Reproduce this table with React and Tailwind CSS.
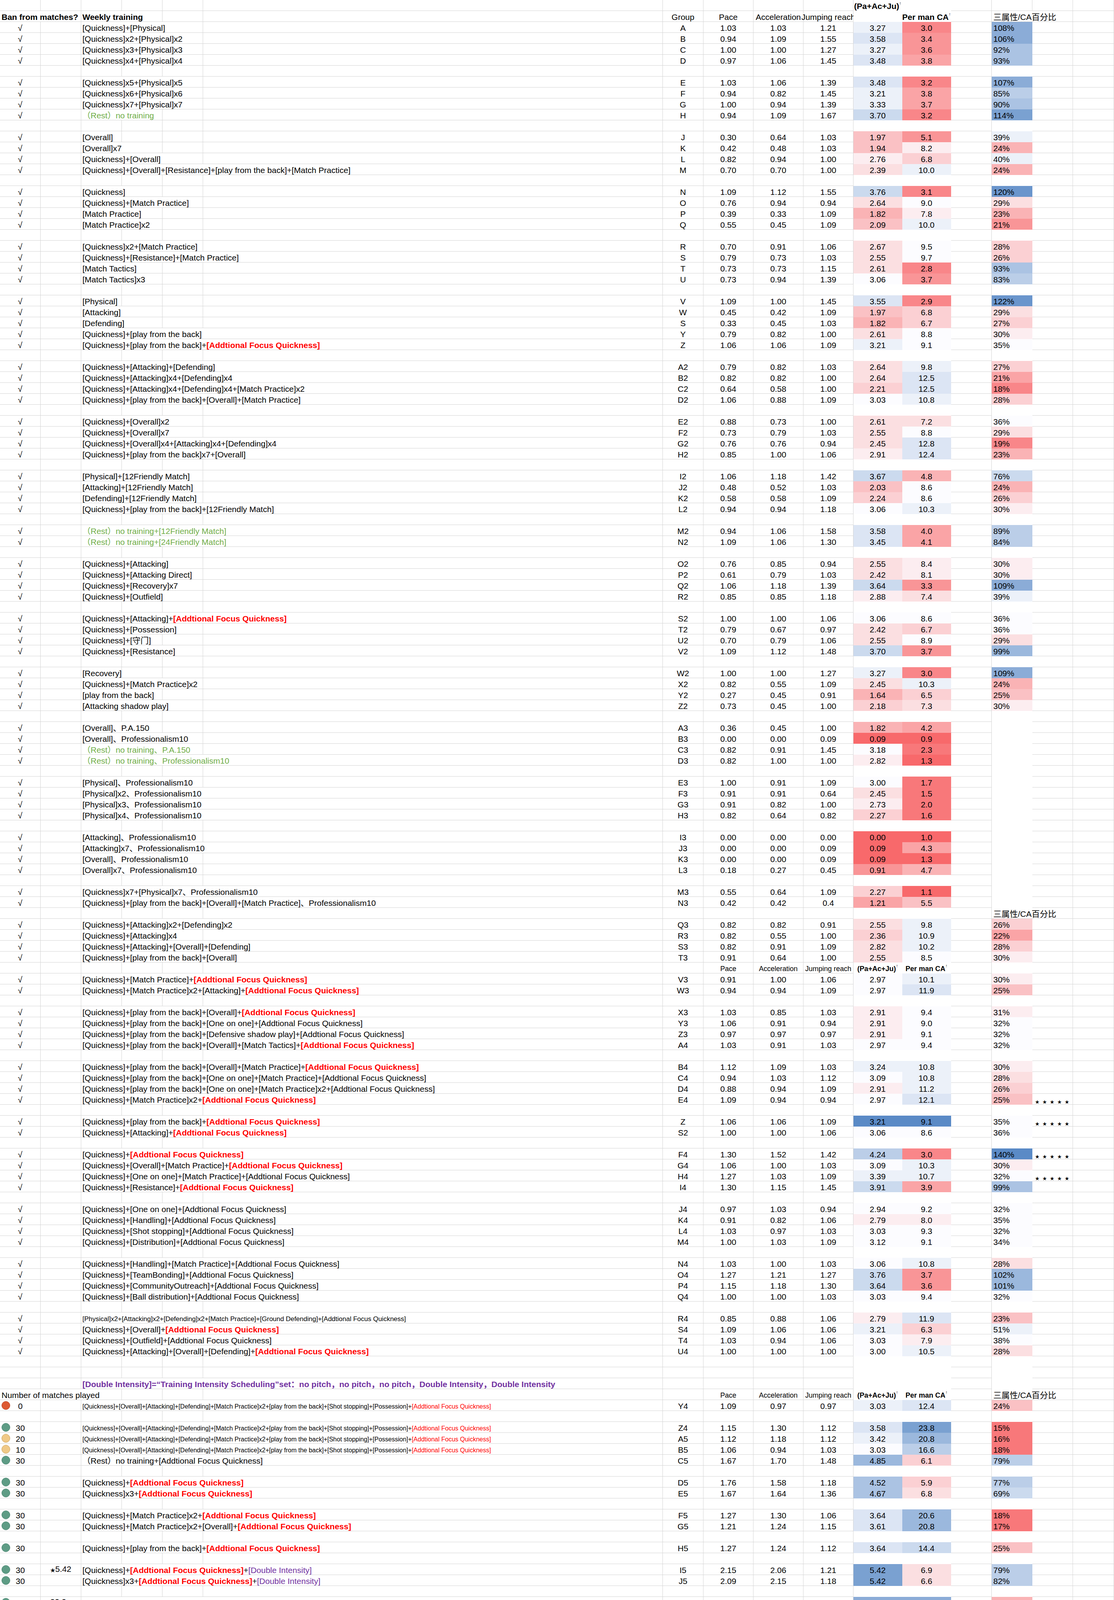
import React from "react";

const FONT = "font-['Liberation_Sans','Noto_Sans_CJK_SC',sans-serif]";
const COLS =
  "grid grid-cols-[104px_104px_104px_104px_104px_1177px_104px_128px_128px_128px_125px_125px_104px_104px_104px_105px]";
const LINE = "border-r border-b border-[#d4d4d4]";
const BASE = "h-7 min-w-0 flex items-end whitespace-nowrap leading-[22px]";
const SPAN = { 1: "", 2: "col-span-2", 3: "col-span-3", 4: "col-span-4" };

// red - white - blue scale, level -10 .. 10
const LV = [
  "bg-[#f8696b]", "bg-[#f8787a]", "bg-[#f98689]", "bg-[#f99597]", "bg-[#faa4a6]",
  "bg-[#fab3b5]", "bg-[#fac1c4]", "bg-[#fbd0d3]", "bg-[#fbdfe1]", "bg-[#fcedf0]",
  "bg-[#fcfcff]",
  "bg-[#ecf1f9]", "bg-[#dce5f4]", "bg-[#cbdaee]", "bg-[#bbcee8]", "bg-[#abc3e3]",
  "bg-[#9bb8dd]", "bg-[#8bacd7]", "bg-[#7aa1d1]", "bg-[#6a95cc]", "bg-[#5a8ac6]",
];

const TONE = {
  K: "",
  R: "text-[#ff0000] font-bold",
  r: "text-[#ff0000]",
  P: "text-[#7030a0] font-bold",
  p: "text-[#7030a0]",
  G: "text-[#70ad47]",
};

const DOT = {
  g: "bg-[#5e9c85] border-[#4b8570]",
  t: "bg-[#f0c987] border-[#c9a35e]",
  r: "bg-[#dd5a33] border-[#b8472a]",
};

const SIZE = {
  21: "text-[21px] leading-[22px]",
  17: "text-[17px] leading-[20px]",
  16: "text-[16px] leading-[20px]",
};

const Q = "[Quickness]";
const AF = "~R[Addtional Focus Quickness]";
const AFr = "~r[Addtional Focus Quickness]";
const DI = "~K+~p[Double Intensity]";
const PD = "+[Addtional Focus Quickness]+[Double Intensity]";
const LONG =
  Q + "+[Overall]+[Attacking]+[Defending]+[Match Practice]x2+[play from the back]+[Shot stopping]+[Possession]+" + AFr;
const PRO = "、Professionalism10";

const _ = { t: "b" };
const d = (a, b, text, g, h = "", i = "", j = "", k = "", kl = 0, l = "", ll = 0, n = "", nl = 0, o = {}) => ({
  t: "d", a, b, text, g, h, i, j, k, kl, l, ll, n, nl, ...o,
});
const v = (text, g, h, i, j, k, kl, l, ll, n = "", nl = 0, o = {}) => d("v", "", text, g, h, i, j, k, kl, l, ll, n, nl, o);

const ROWS = [
  { t: "h0" },
  { t: "h1" },
  v(Q + "+[Physical]", "A", "1.03", "1.03", "1.21", "3.27", 1, "3.0", -8, "108%", 7),
  v(Q + "x2+[Physical]x2", "B", "0.94", "1.09", "1.55", "3.58", 2, "3.4", -7, "106%", 7),
  v(Q + "x3+[Physical]x3", "C", "1.00", "1.00", "1.27", "3.27", 1, "3.6", -7, "92%", 5),
  v(Q + "x4+[Physical]x4", "D", "0.97", "1.06", "1.45", "3.48", 2, "3.8", -6, "93%", 5),
  _,
  v(Q + "x5+[Physical]x5", "E", "1.03", "1.06", "1.39", "3.48", 2, "3.2", -8, "107%", 7),
  v(Q + "x6+[Physical]x6", "F", "0.94", "0.82", "1.45", "3.21", 1, "3.8", -6, "85%", 4),
  v(Q + "x7+[Physical]x7", "G", "1.00", "0.94", "1.39", "3.33", 1, "3.7", -6, "90%", 5),
  v("~G（Rest）no training", "H", "0.94", "1.09", "1.67", "3.70", 3, "3.2", -8, "114%", 8),
  _,
  v("[Overall]", "J", "0.30", "0.64", "1.03", "1.97", -4, "5.1", -7, "39%", 1),
  v("[Overall]x7", "K", "0.42", "0.48", "1.03", "1.94", -4, "8.2", -1, "24%", -5),
  v(Q + "+[Overall]", "L", "0.82", "0.94", "1.00", "2.76", -1, "6.8", -3, "40%", 1),
  v(Q + "+[Overall]+[Resistance]+[play from the back]+[Match Practice]", "M", "0.70", "0.70", "1.00", "2.39", -2, "10.0", 1, "24%", -5),
  _,
  v(Q, "N", "1.09", "1.12", "1.55", "3.76", 3, "3.1", -8, "120%", 9),
  v(Q + "+[Match Practice]", "O", "0.76", "0.94", "0.94", "2.64", -2, "9.0", 0, "29%", -2),
  v("[Match Practice]", "P", "0.39", "0.33", "1.09", "1.82", -5, "7.8", -1, "23%", -5),
  v("[Match Practice]x2", "Q", "0.55", "0.45", "1.09", "2.09", -4, "10.0", 1, "21%", -7),
  _,
  v(Q + "x2+[Match Practice]", "R", "0.70", "0.91", "1.06", "2.67", -2, "9.5", 0, "28%", -3),
  v(Q + "+[Resistance]+[Match Practice]", "S", "0.79", "0.73", "1.03", "2.55", -2, "9.7", 0, "26%", -3),
  v("[Match Tactics]", "T", "0.73", "0.73", "1.15", "2.61", -2, "2.8", -8, "93%", 5),
  v("[Match Tactics]x3", "U", "0.73", "0.94", "1.39", "3.06", 0, "3.7", -7, "83%", 4),
  _,
  v("[Physical]", "V", "1.09", "1.00", "1.45", "3.55", 2, "2.9", -8, "122%", 9),
  v("[Attacking]", "W", "0.45", "0.42", "1.09", "1.97", -4, "6.8", -3, "29%", -2),
  v("[Defending]", "S", "0.33", "0.45", "1.03", "1.82", -5, "6.7", -3, "27%", -3),
  v(Q + "+[play from the back]", "Y", "0.79", "0.82", "1.00", "2.61", -2, "8.8", 0, "30%", -1),
  v(Q + "+[play from the back]+" + AF, "Z", "1.06", "1.06", "1.09", "3.21", 1, "9.1", 0, "35%", 0),
  _,
  v(Q + "+[Attacking]+[Defending]", "A2", "0.79", "0.82", "1.03", "2.64", -2, "9.8", 1, "27%", -3),
  v(Q + "+[Attacking]x4+[Defending]x4", "B2", "0.82", "0.82", "1.00", "2.64", -2, "12.5", 2, "21%", -6),
  v(Q + "+[Attacking]x4+[Defending]x4+[Match Practice]x2", "C2", "0.64", "0.58", "1.00", "2.21", -3, "12.5", 2, "18%", -8),
  v(Q + "+[play from the back]+[Overall]+[Match Practice]", "D2", "1.06", "0.88", "1.09", "3.03", 0, "10.8", 1, "28%", -3),
  _,
  v(Q + "+[Overall]x2", "E2", "0.88", "0.73", "1.00", "2.61", -2, "7.2", -2, "36%", 0),
  v(Q + "+[Overall]x7", "F2", "0.73", "0.79", "1.03", "2.55", -2, "8.8", 0, "29%", -2),
  v(Q + "+[Overall]x4+[Attacking]x4+[Defending]x4", "G2", "0.76", "0.76", "0.94", "2.45", -2, "12.8", 2, "19%", -8),
  v(Q + "+[play from the back]x7+[Overall]", "H2", "0.85", "1.00", "1.06", "2.91", -1, "12.4", 2, "23%", -5),
  _,
  v("[Physical]+[12Friendly Match]", "I2", "1.06", "1.18", "1.42", "3.67", 3, "4.8", -5, "76%", 3),
  v("[Attacking]+[12Friendly Match]", "J2", "0.48", "0.52", "1.03", "2.03", -4, "8.6", 0, "24%", -5),
  v("[Defending]+[12Friendly Match]", "K2", "0.58", "0.58", "1.09", "2.24", -3, "8.6", 0, "26%", -3),
  v(Q + "+[play from the back]+[12Friendly Match]", "L2", "0.94", "0.94", "1.18", "3.06", 0, "10.3", 1, "30%", -1),
  _,
  v("~G（Rest）no training+[12Friendly Match]", "M2", "0.94", "1.06", "1.58", "3.58", 2, "4.0", -6, "89%", 4),
  v("~G（Rest）no training+[24Friendly Match]", "N2", "1.09", "1.06", "1.30", "3.45", 2, "4.1", -6, "84%", 4),
  _,
  v(Q + "+[Attacking]", "O2", "0.76", "0.85", "0.94", "2.55", -2, "8.4", -1, "30%", -1),
  v(Q + "+[Attacking Direct]", "P2", "0.61", "0.79", "1.03", "2.42", -2, "8.1", -1, "30%", -1),
  v(Q + "+[Recovery]x7", "Q2", "1.06", "1.18", "1.39", "3.64", 3, "3.3", -7, "109%", 7),
  v(Q + "+[Outfield]", "R2", "0.85", "0.85", "1.18", "2.88", -1, "7.4", -2, "39%", 1),
  _,
  v(Q + "+[Attacking]+" + AF, "S2", "1.00", "1.00", "1.06", "3.06", 0, "8.6", 0, "36%", 0),
  v(Q + "+[Possession]", "T2", "0.79", "0.67", "0.97", "2.42", -2, "6.7", -3, "36%", 0),
  v(Q + "+[守门]", "U2", "0.70", "0.79", "1.06", "2.55", -2, "8.9", 0, "29%", -2),
  v(Q + "+[Resistance]", "V2", "1.09", "1.12", "1.48", "3.70", 3, "3.7", -7, "99%", 6),
  _,
  v("[Recovery]", "W2", "1.00", "1.00", "1.27", "3.27", 1, "3.0", -8, "109%", 7),
  v(Q + "+[Match Practice]x2", "X2", "0.82", "0.55", "1.09", "2.45", -2, "10.3", 1, "24%", -5),
  v("[play from the back]", "Y2", "0.27", "0.45", "0.91", "1.64", -5, "6.5", -3, "25%", -4),
  v("[Attacking shadow play]", "Z2", "0.73", "0.45", "1.00", "2.18", -3, "7.3", -2, "30%", -1),
  _,
  v("[Overall]、P.A.150", "A3", "0.36", "0.45", "1.00", "1.82", -5, "4.2", -6),
  v("[Overall]" + PRO, "B3", "0.00", "0.00", "0.09", "0.09", -10, "0.9", -10),
  v("~G（Rest）no training、P.A.150", "C3", "0.82", "0.91", "1.45", "3.18", 0, "2.3", -9),
  v("~G（Rest）no training" + PRO, "D3", "0.82", "1.00", "1.00", "2.82", -1, "1.3", -10),
  _,
  v("[Physical]" + PRO, "E3", "1.00", "0.91", "1.09", "3.00", 0, "1.7", -9),
  v("[Physical]x2" + PRO, "F3", "0.91", "0.91", "0.64", "2.45", -2, "1.5", -9),
  v("[Physical]x3" + PRO, "G3", "0.91", "0.82", "1.00", "2.73", -1, "2.0", -9),
  v("[Physical]x4" + PRO, "H3", "0.82", "0.64", "0.82", "2.27", -3, "1.6", -9),
  _,
  v("[Attacking]" + PRO, "I3", "0.00", "0.00", "0.00", "0.00", -10, "1.0", -10),
  v("[Attacking]x7" + PRO, "J3", "0.00", "0.00", "0.09", "0.09", -10, "4.3", -6),
  v("[Overall]" + PRO, "K3", "0.00", "0.00", "0.09", "0.09", -10, "1.3", -10),
  v("[Overall]x7" + PRO, "L3", "0.18", "0.27", "0.45", "0.91", -7, "4.7", -5),
  _,
  v(Q + "x7+[Physical]x7" + PRO, "M3", "0.55", "0.64", "1.09", "2.27", -3, "1.1", -10),
  v(Q + "+[play from the back]+[Overall]+[Match Practice]" + PRO, "N3", "0.42", "0.42", "0.4", "1.21", -6, "5.5", -4),
  { t: "pct" },
  v(Q + "+[Attacking]x2+[Defending]x2", "Q3", "0.82", "0.82", "0.91", "2.55", -2, "9.8", 1, "26%", -3),
  v(Q + "+[Attacking]x4", "R3", "0.82", "0.55", "1.00", "2.36", -3, "10.9", 1, "22%", -6),
  v(Q + "+[Attacking]+[Overall]+[Defending]", "S3", "0.82", "0.91", "1.09", "2.82", -2, "10.2", 1, "28%", -3),
  v(Q + "+[play from the back]+[Overall]", "T3", "0.91", "0.64", "1.00", "2.55", -2, "8.5", 0, "30%", -1),
  { t: "h2" },
  v(Q + "+[Match Practice]+" + AF, "V3", "0.91", "1.00", "1.06", "2.97", 0, "10.1", 1, "30%", -1),
  v(Q + "+[Match Practice]x2+[Attacking]+" + AF, "W3", "0.94", "0.94", "1.09", "2.97", 0, "11.9", 2, "25%", -4),
  _,
  v(Q + "+[play from the back]+[Overall]+" + AF, "X3", "1.03", "0.85", "1.03", "2.91", -1, "9.4", 0, "31%", -1),
  v(Q + "+[play from the back]+[One on one]+[Addtional Focus Quickness]", "Y3", "1.06", "0.91", "0.94", "2.91", -1, "9.0", 0, "32%", 0),
  v(Q + "+[play from the back]+[Defensive shadow play]+[Addtional Focus Quickness]", "Z3", "0.97", "0.97", "0.97", "2.91", -1, "9.1", 0, "32%", 0),
  v(Q + "+[play from the back]+[Overall]+[Match Tactics]+" + AF, "A4", "1.03", "0.91", "1.03", "2.97", 0, "9.4", 0, "32%", 0),
  _,
  v(Q + "+[play from the back]+[Overall]+[Match Practice]+" + AF, "B4", "1.12", "1.09", "1.03", "3.24", 1, "10.8", 1, "30%", -1),
  v(Q + "+[play from the back]+[One on one]+[Match Practice]+[Addtional Focus Quickness]", "C4", "0.94", "1.03", "1.12", "3.09", 0, "10.8", 1, "28%", -2),
  v(Q + "+[play from the back]+[One on one]+[Match Practice]x2+[Addtional Focus Quickness]", "D4", "0.88", "0.94", "1.09", "2.91", -1, "11.2", 1, "26%", -3),
  v(Q + "+[Match Practice]x2+" + AF, "E4", "1.09", "0.94", "0.94", "2.97", 0, "12.1", 2, "25%", -4, { st: true }),
  _,
  v(Q + "+[play from the back]+" + AF, "Z", "1.06", "1.06", "1.09", "3.21", 10, "9.1", 10, "35%", 0, { st: true }),
  v(Q + "+[Attacking]+" + AF, "S2", "1.00", "1.00", "1.06", "3.06", 0, "8.6", 0, "36%", 0),
  _,
  v(Q + "+" + AF, "F4", "1.30", "1.52", "1.42", "4.24", 4, "3.0", -8, "140%", 10, { st: true }),
  v(Q + "+[Overall]+[Match Practice]+" + AF, "G4", "1.06", "1.00", "1.03", "3.09", 0, "10.3", 1, "30%", -1),
  v(Q + "+[One on one]+[Match Practice]+[Addtional Focus Quickness]", "H4", "1.27", "1.03", "1.09", "3.39", 1, "10.7", 1, "32%", 0, { st: true }),
  v(Q + "+[Resistance]+" + AF, "I4", "1.30", "1.15", "1.45", "3.91", 3, "3.9", -6, "99%", 5),
  _,
  v(Q + "+[One on one]+[Addtional Focus Quickness]", "J4", "0.97", "1.03", "0.94", "2.94", 0, "9.2", 0, "32%", 0),
  v(Q + "+[Handling]+[Addtional Focus Quickness]", "K4", "0.91", "0.82", "1.06", "2.79", -1, "8.0", -1, "35%", 0),
  v(Q + "+[Shot stopping]+[Addtional Focus Quickness]", "L4", "1.03", "0.97", "1.03", "3.03", 0, "9.3", 0, "32%", 0),
  v(Q + "+[Distribution]+[Addtional Focus Quickness]", "M4", "1.00", "1.03", "1.09", "3.12", 0, "9.1", 0, "34%", 0),
  _,
  v(Q + "+[Handling]+[Match Practice]+[Addtional Focus Quickness]", "N4", "1.03", "1.00", "1.03", "3.06", 0, "10.8", 1, "28%", -2),
  v(Q + "+[TeamBonding]+[Addtional Focus Quickness]", "O4", "1.27", "1.21", "1.27", "3.76", 3, "3.7", -7, "102%", 6),
  v(Q + "+[CommunityOutreach]+[Addtional Focus Quickness]", "P4", "1.15", "1.18", "1.30", "3.64", 3, "3.6", -7, "101%", 6),
  v(Q + "+[Ball distribution]+[Addtional Focus Quickness]", "Q4", "1.00", "1.00", "1.03", "3.03", 0, "9.4", 0, "32%", 0),
  _,
  v("[Physical]x2+[Attacking]x2+[Defending]x2+[Match Practice]+[Ground Defending]+[Addtional Focus Quickness]", "R4", "0.85", "0.88", "1.06", "2.79", -1, "11.9", 2, "23%", -4, { s: 17 }),
  v(Q + "+[Overall]+" + AF, "S4", "1.09", "1.06", "1.06", "3.21", 1, "6.3", -3, "51%", 1),
  v(Q + "+[Outfield]+[Addtional Focus Quickness]", "T4", "1.03", "0.94", "1.06", "3.03", 0, "7.9", -1, "38%", 0),
  v(Q + "+[Attacking]+[Overall]+[Defending]+" + AF, "U4", "1.00", "1.00", "1.00", "3.00", 0, "10.5", 1, "28%", -2),
  _,
  _,
  { t: "di" },
  { t: "played", head: true },
  d("r0", "", LONG, "Y4", "1.09", "0.97", "0.97", "3.03", 1, "12.4", 2, "24%", -4, { s: 16 }),
  _,
  d("g30", "", LONG, "Z4", "1.15", "1.30", "1.12", "3.58", 2, "23.8", 8, "15%", -9, { s: 16 }),
  d("t20", "", LONG, "A5", "1.12", "1.18", "1.12", "3.42", 1, "20.8", 6, "16%", -9, { s: 16 }),
  d("t10", "", LONG, "B5", "1.06", "0.94", "1.03", "3.03", 0, "16.6", 4, "18%", -9, { s: 16 }),
  d("g30", "", "（Rest）no training+[Addtional Focus Quickness]", "C5", "1.67", "1.70", "1.48", "4.85", 6, "6.1", -3, "79%", 4),
  _,
  d("g30", "", Q + "+" + AF, "D5", "1.76", "1.58", "1.18", "4.52", 5, "5.9", -3, "77%", 4),
  d("g30", "", Q + "x3+" + AF, "E5", "1.67", "1.64", "1.36", "4.67", 5, "6.8", -2, "69%", 3),
  _,
  d("g30", "", Q + "+[Match Practice]x2+" + AF, "F5", "1.27", "1.30", "1.06", "3.64", 2, "20.6", 6, "18%", -9),
  d("g30", "", Q + "+[Match Practice]x2+[Overall]+" + AF, "G5", "1.21", "1.24", "1.15", "3.61", 2, "20.8", 6, "17%", -9),
  _,
  d("g30", "", Q + "+[play from the back]+" + AF, "H5", "1.27", "1.24", "1.12", "3.64", 2, "14.4", 3, "25%", -4),
  _,
  d("g30", "★5.42", Q + "+" + AF + DI, "I5", "2.15", "2.06", "1.21", "5.42", 8, "6.9", -2, "79%", 4),
  d("g30", "", Q + "x3+" + AF + DI, "J5", "2.09", "2.15", "1.18", "5.42", 8, "6.6", -2, "82%", 4),
  _,
  d("g30", "22.2★", Q + "+[Match Practice]x2+" + AF + DI, "K5", "2.03", "1.85", "1.09", "4.97", 7, "22.2", 7, "22%", -5),
  d("g30", "", Q + "+[Match Practice]x2+[Overall]+" + AF + DI, "L5", "2.09", "1.97", "1.12", "5.18", 7, "23.0", 7, "23%", -5),
  _,
  d("r0", "", Q + "+" + AF + DI, "M5", "2.09", "2.12", "1.42", "5.64", 9, "4.0", -5, "140%", 9),
  d("r0", "", Q + "+[Overall]+[Match Practice]+" + AF + DI, "N5", "1.97", "1.88", "0.97", "4.82", 6, "11.0", 1, "44%", 1),
  d("r0", "", Q + "+[One on one]+[Match Practice]+" + AF + DI, "O5", "1.76", "1.76", "1.12", "4.64", 5, "12.6", 2, "37%", 0),
  d("r0", "", Q + "+[Resistance]+" + AF + DI, "P5", "2.18", "2.09", "1.27", "5.55", 9, "4.7", -4, "118%", 7),
  { t: "played" },
  d("r0", "", "~G（Rest）no training+[Addtional Focus Quickness]+[Double Intensity]", "Q5", "2.21", "2.09", "1.42", "5.73", 10, "3.9", -5, "145%", 10),
  d("g30", "★5.73", "~G（Rest）no training+[Addtional Focus Quickness]+[Double Intensity]", "R5", "2.15", "2.18", "1.39", "5.73", 10, "6.2", -3, "93%", 10),
  d("g30", "", "~G（Rest）no training+[Addtional Focus Quickness]", "C5", "1.67", "1.70", "1.48", "4.85", 10, "6.1", 10, "79%", 10),
  d("r0", "", "~G（Rest）no training", "H", "0.94", "1.09", "1.67", "3.70", 2, "3.2", -6, "114%", 7),
  _,
  d("r0", "", Q + "+" + AF, "F4", "1.30", "1.52", "1.42", "4.24", 10, "3.0", 10, "140%", 10),
  d("r0", "", Q + "+[Match Practice]x2+" + AF, "E4", "1.09", "0.94", "0.94", "2.97", 10, "12.1", 10, "25%", 10),
  d("r0", "", Q + "+[play from the back]+" + AF, "Z", "1.06", "1.06", "1.09", "3.21", 10, "9.1", 10, "35%", 10),
  _,
  d("g30", "", "[Overall]+" + AF + DI, "S5", "2.18", "2.06", "1.09", "5.33", 8, "5.9", -3, "90%", 10),
  d("g30", "15.1★", Q + "+[play from the back]+" + AF + DI, "T5", "2.06", "1.85", "1.06", "4.97", 7, "15.1", 3, "33%", 10),
  _,
  d("g30", "", Q + "+" + AF, "D5", "1.76", "1.58", "1.18", "4.52", 10, "5.9", 10),
  _,
  d("g30", "", "~G（Rest）no training+[Addtional Focus Quickness]+[Double Intensity x5]", "U5", "2.21", "2.21", "1.27", "5.70", 10, "5.8", -3),
  d("g30", "", Q + "+[Defending wide]+" + AF + DI, "V5", "1.94", "1.88", "1.06", "4.88", 6, "15.6", 3),
  _,
  d("g30", "", Q + "+[play from the back]+" + AFr + DI + "~K+~p[all defend team]", "W5", "1.91", "1.91", "1.06", "4.88", 6, "16.0", 3, "", 0, { s: 17 }),
  d("g30", "", Q + "+[Attacking Direct]+" + AFr + DI + "~K+~p[all attack team]", "X5", "1.82", "2.00", "1.09", "4.91", 6, "13.9", 2, "", 0, { s: 17 }),
  d("g30", "", Q + "+[Match Practice]+[Attacking]+[Match Tactics]x3+[TeamBonding]+" + AFr + DI + "~K+~p[all attack team]", "Y5", "1.82", "1.91", "1.03", "4.76", 6, "16.4", 3, "", 0, { s: 17 }),
  d("g30", "", Q + "+[Shot stopping]+[Handling]+[One on one]+[Distribution]+" + AFr + DI, "Z5", "2.03", "1.97", "1.09", "5.09", 7, "20.4", 6, "", 0, { s: 17 }),
  _,
  d("g30", "", Q + "+[Match Practice]x2+[Physical]+" + AFr + DI, "A6", "1.94", "1.88", "1.09", "4.91", 7, "22.7", 7),
  _,
  d("g30", "", Q + "+[Match Practice]+[Overall]+" + AFr + DI, "B6", "1.94", "1.82", "1.03", "4.79", 5, "18.3", 5),
  d("g30", "", Q + "+[Overall]x4+[Attacking]x4+[Defending]x4+" + AFr + DI, "C6", "1.97", "1.82", "1.15", "4.94", 6, "25.3", 9),
  d("g30", "", Q + "+[Attacking]x4+[Defending]x4+[Match Practice]+" + AFr + DI, "D6", "2.06", "1.88", "1.06", "5.00", 6, "25.4", 9),
  d("g30", "", Q + "+[Attacking]x4+[Defending]x4+" + AFr + DI, "E6", "1.97", "1.97", "1.03", "4.97", 6, "23.8", 8),
  _,
  d("g30", "", Q + "+[Match Practice]x2+[play from the back]+" + AFr + DI, "F6", "2.03", "1.88", "1.00", "4.91", 6, "22.4", 7),
  d("g30", "", Q + "+[Ball Retention]+" + AFr + DI, "G6", "2.03", "2.03", "1.00", "5.06", 7, "15.1", 3),
  d("g30", "", Q + "+[Match Practice]x2+[Attacking]+[Defending]+" + AFr + DI, "H6", "2.03", "1.91", "1.06", "5.00", 6, "23.9", 8),
  d("g30", "", Q + "+[Match Practice]x2+[Attacking Direct]+" + AFr + DI, "I6", "2.06", "1.91", "1.06", "5.03", 7, "23.2", 8),
  _,
  d("g30", "", Q + "+[Match Practice]x2+[play from the back]+[Recovery]x7" + PD, "J6", "1.94", "1.88", "1.03", "4.85", -4, "23.1", 9),
  d("g30", "", Q + "+[Possession]x2" + PD, "K6", "1.91", "1.94", "1.00", "4.85", -4, "19.6", 5),
  d("g30", "", "[Physical]" + PD, "L6", "2.15", "2.06", "1.15", "5.36", 6, "7.4", -9),
  d("g30", "", "[Resistance]" + PD, "M6", "2.09", "2.18", "1.30", "5.58", 10, "6.7", -9),
  _,
  d("g30", "", "[Resistance]+[Match Practice]x2" + PD, "N6", "1.85", "1.91", "1.09", "4.85", -4, "22.6", 8),
  d("g30", "", "[Resistance]+[play from the back]" + PD, "O6", "1.94", "2.00", "0.97", "4.91", -1, "14.5", -1),
  _,
  d("g30", "", Q + "+[Match Practice]x2+[Overall]" + PD, "L5", "2.09", "1.97", "1.12", "5.18", 10, "23.0", 10),
  d("g30", "", "Experimental test", "P6"),
  d("g30", "", "Experimental test", "Q6"),
  d("g30", "", "Experimental test", "R6"),
  _,
  d("g30", "", "Experimental test", "S6", "2.00", "1.94", "1.27", "5.21", 3, "5.7", -10),
  d("g30", "", "Experimental test", "T6", "2.21", "2.09", "1.24", "5.55", 10, "5.7", -10),
  _,
  d("g30", "", Q + "+[Overall]" + PD, "U6", "2.15", "1.88", "1.12", "5.15", 3, "6.1", -10),
  d("g30", "", "[Overall]+[Match Practice]x2" + PD, "V6", "1.88", "1.88", "1.00", "4.76", -10, "21.7", 7),
  d("g30", "", Q + "+[Match Practice]" + PD, "W6", "2.09", "1.91", "0.97", "4.97", 1, "17.6", 3),
  d("g30", "", "[Match Practice]x2" + PD, "X6", "2.00", "1.76", "1.09", "4.85", -4, "20.8", 6),
  _,
  d("g30", "25.5★", Q + "+[Attacking]+[Defending]+[Overall]+[Match Practice]x2" + PD, "Y6", "1.85", "1.97", "1.12", "4.94", 7, "25.5", 9),
  d("g30", "", Q + "+[Attacking]x2+[Defending]x2+[Match Practice]x2" + PD, "Z6", "1.91", "1.79", "0.94", "4.64", 5, "24.6", 8),
  d("g30", "", Q + "+[Attacking]x2+[Defending]+[Match Practice]x2" + PD, "A7", "1.91", "2.00", "1.03", "4.94", 6, "23.8", 8),
  d("g30", "25.5★", Q + "+[Attacking]+[Defending]+[Overall]+[play from the back]+[Match Practice]x2" + PD, "B7", "1.94", "1.88", "1.24", "5.06", 7, "25.5", 9),
  _,
];

function segs(text) {
  return text
    .split("~")
    .map((p, i) => (i === 0 ? ["K", p] : [p[0], p.slice(1)]))
    .filter(([, t]) => t);
}

// how many sheet columns (C..F) the overflowing text covers
function spanFor(text, size) {
  let w = 0;
  for (const ch of text.replace(/~./g, "")) w += /[\u3000-\u9fff\uff00-\uffef]/.test(ch) ? size : size * 0.475;
  const end = 211 + w;
  return end <= 312 ? 1 : end <= 416 ? 2 : end <= 520 ? 3 : 4;
}

function C({ span = 1, className = "", children }) {
  return <div className={`${BASE} ${LINE} ${SPAN[span]} ${className}`}>{children}</div>;
}

function W({ className = "", children }) {
  return <div className={`${BASE} border-r border-b border-transparent bg-white ${className}`}>{children}</div>;
}

function Fill({ lvl, left, children }) {
  return (
    <div className={`${BASE} border-r border-b border-transparent ${LV[lvl + 10]} ${left ? "pl-1" : "justify-center"}`}>
      {children}
    </div>
  );
}

function Up() {
  return <span className="self-start pt-[3px] text-[11px] leading-none font-normal">↑</span>;
}

function Mark({ a }) {
  if (!a) return <C />;
  if (a === "v") return <C className="justify-center">√</C>;
  return (
    <div className={`h-7 flex items-center ${LINE}`}>
      <span className={`ml-1 h-[22px] w-[22px] shrink-0 rounded-full border ${DOT[a[0]]}`} />
      <span className="w-[52px] pt-1 text-center leading-[22px]">{a.slice(1)}</span>
    </div>
  );
}

function StarNum({ b }) {
  const [pre, post] = b.split("★");
  return (
    <span>
      {pre}
      <span className="text-[13px]">★</span>
      {post}
    </span>
  );
}

function TextCells({ text, size = 21 }) {
  const span = spanFor(text, size);
  const rest = [];
  for (let c = span; c < 4; c++) rest.push(<C key={c} />);
  return (
    <>
      <C span={span} className="pl-[3px]">
        <span className={SIZE[size]}>
          {segs(text).map(([tone, t], i) => (
            <span key={i} className={TONE[tone]}>
              {t}
            </span>
          ))}
        </span>
      </C>
      {rest}
    </>
  );
}

function EmptyLeft() {
  return (
    <>
      <C />
      <C />
      <C />
      <C />
      <C />
      <C />
    </>
  );
}

function Played() {
  return (
    <>
      <C span={3} className="pl-1">Number of matches played</C>
      <C />
      <C />
      <C />
    </>
  );
}

function Right({ r = {}, idx }) {
  const wN = idx <= 165;
  return (
    <>
      <C className="justify-center">{r.g}</C>
      <C className="justify-center">{r.h}</C>
      <C className="justify-center">{r.i}</C>
      <C className="justify-center">{r.j}</C>
      {r.k ? <Fill lvl={r.kl}>{r.k}</Fill> : <W />}
      {r.l ? <Fill lvl={r.ll}>{r.l}</Fill> : <W />}
      <C />
      {r.n ? <Fill lvl={r.nl} left>{r.n}</Fill> : wN ? <W /> : <C />}
      <C className="items-center">
        {r.st && <span className="pl-[7px] text-[11px] leading-none tracking-[8px]">★★★★★</span>}
      </C>
      <C />
    </>
  );
}

function SubHead({ pct }) {
  return (
    <>
      <C />
      <C className="justify-center text-[18px]">Pace</C>
      <C className="justify-center text-[18px]">Acceleration</C>
      <C className="justify-center text-[18px]">Jumping reach</C>
      <W className="justify-center text-[18px] font-bold">
        (Pa+Ac+Ju)
        <Up />
      </W>
      <W className="justify-center text-[18px] font-bold">
        Per man CA
        <Up />
      </W>
      <C />
      {pct ? <C span={2} className="pl-1">三属性/CA百分比</C> : <W />}
      {!pct && <C />}
      <C />
    </>
  );
}

function Row({ r, idx }) {
  if (r.t === "h0") {
    return (
      <div className={COLS}>
        <EmptyLeft />
        <C />
        <C />
        <C />
        <C />
        <W className="justify-center font-bold">
          (Pa+Ac+Ju)
          <Up />
        </W>
        <W />
        <C />
        <C />
        <C />
        <C />
      </div>
    );
  }
  if (r.t === "h1") {
    return (
      <div className={COLS}>
        <C span={2} className="pl-1 font-bold">Ban from matches?</C>
        <C span={2} className="pl-[3px] font-bold">Weekly training</C>
        <C />
        <C />
        <C className="justify-center">Group</C>
        <C className="justify-center">Pace</C>
        <C className="justify-center">Acceleration</C>
        <C className="justify-center">Jumping reach</C>
        <W />
        <W className="justify-center font-bold">
          Per man CA
          <Up />
        </W>
        <C />
        <C span={2} className="pl-1">三属性/CA百分比</C>
        <C />
      </div>
    );
  }
  if (r.t === "pct") {
    return (
      <div className={COLS}>
        <EmptyLeft />
        <C />
        <C />
        <C />
        <C />
        <W />
        <W />
        <C />
        <C span={2} className="pl-1">三属性/CA百分比</C>
        <C />
      </div>
    );
  }
  if (r.t === "h2") {
    return (
      <div className={COLS}>
        <EmptyLeft />
        <SubHead />
      </div>
    );
  }
  if (r.t === "di") {
    return (
      <div className={COLS}>
        <C />
        <C />
        <C span={4} className="pl-[3px] font-bold text-[#7030a0]">
          [Double Intensity]=“Training Intensity Scheduling”set：no pitch，no pitch，no pitch，Double Intensity，Double Intensity
        </C>
        <Right idx={idx} />
      </div>
    );
  }
  if (r.t === "played") {
    return (
      <div className={COLS}>
        <Played />
        {r.head ? <SubHead pct /> : <Right idx={idx} />}
      </div>
    );
  }
  if (r.t === "b") {
    return (
      <div className={COLS}>
        <EmptyLeft />
        <Right idx={idx} />
      </div>
    );
  }
  return (
    <div className={COLS}>
      <Mark a={r.a} />
      <C className="justify-center">{r.b && <StarNum b={r.b} />}</C>
      <TextCells text={r.text} size={r.s || 21} />
      <Right r={r} idx={idx} />
    </div>
  );
}

export default function App() {
  return (
    <div className={`w-[2852px] bg-white text-[21px] text-black ${FONT}`}>
      {ROWS.map((r, idx) => (
        <Row key={idx} r={r} idx={idx} />
      ))}
    </div>
  );
}
